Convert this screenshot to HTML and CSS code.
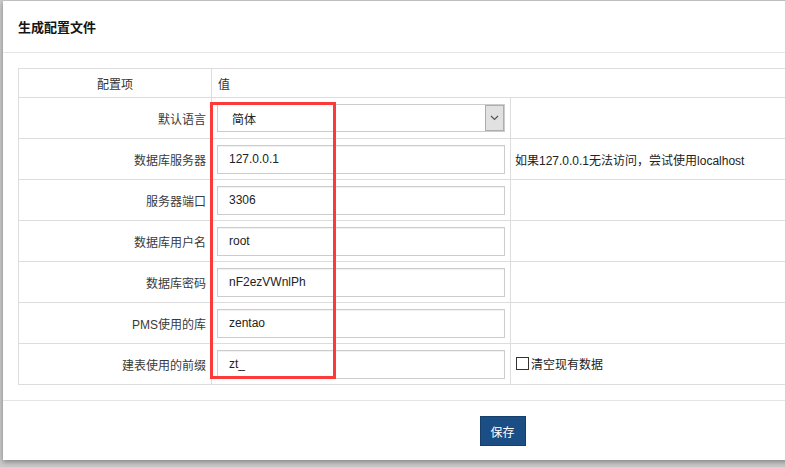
FILE: index.html
```html
<!DOCTYPE html>
<html>
<head>
<meta charset="utf-8">
<link rel="stylesheet" href="styles.css">
</head>
<body>
<div class="modal">
  <div class="modal-header">生成配置文件</div>
  <div class="modal-body">
    <table class="cfg">
      <colgroup><col class="c1"><col class="c2"><col></colgroup>
      <tr class="head"><th class="th-key">配置项</th><th class="th-val" colspan="2">值</th></tr>
      <tr>
        <td class="key">默认语言</td>
        <td class="val"><div class="select"><span class="select-value">简体</span><span class="select-arrow"><svg width="9" height="6" viewBox="0 0 9 6"><path d="M1 1 L4.5 4.5 L8 1" fill="none" stroke="#555" stroke-width="1.2"/></svg></span></div></td>
        <td class="note"></td>
      </tr>
      <tr>
        <td class="key">数据库服务器</td>
        <td class="val"><input class="inp" type="text" value="127.0.0.1"></td>
        <td class="note">如果127.0.0.1无法访问，尝试使用localhost</td>
      </tr>
      <tr>
        <td class="key">服务器端口</td>
        <td class="val"><input class="inp" type="text" value="3306"></td>
        <td class="note"></td>
      </tr>
      <tr>
        <td class="key">数据库用户名</td>
        <td class="val"><input class="inp" type="text" value="root"></td>
        <td class="note"></td>
      </tr>
      <tr>
        <td class="key">数据库密码</td>
        <td class="val"><input class="inp" type="text" value="nF2ezVWnlPh"></td>
        <td class="note"></td>
      </tr>
      <tr>
        <td class="key">PMS使用的库</td>
        <td class="val"><input class="inp" type="text" value="zentao"></td>
        <td class="note"></td>
      </tr>
      <tr>
        <td class="key">建表使用的前缀</td>
        <td class="val"><input class="inp" type="text" value="zt_"></td>
        <td class="note"><label class="chk"><input type="checkbox" class="box">清空现有数据</label></td>
      </tr>
    </table>
  </div>
  <div class="modal-footer"><button class="btn">保存</button></div>
</div>
<div class="annot"></div>
</body>
</html>
```
FILE: styles.css
```css
html, body {
  margin: 0;
  padding: 0;
  overflow: hidden;
}
body {
  background: #c9c9c9;
  padding: 1px 0 0 3px;
  width: 785px;
  height: 467px;
  box-sizing: border-box;
  font-family: "Liberation Sans", "Noto Sans CJK SC", sans-serif;
  font-size: 12px;
  color: #333;
  position: relative;
}
.modal {
  width: 998px;
  height: 459px;
  background: #fff;
  box-shadow: 0 2px 5px rgba(0,0,0,0.35);
  display: flex;
  flex-direction: column;
}
.modal-header {
  height: 51px;
  border-bottom: 1px solid #e5e5e5;
  padding-left: 15px;
  display: flex;
  align-items: center;
  font-size: 13px;
  font-weight: bold;
  color: #141414;
}
.modal-body {
  padding: 15px 15px 15px;
}
.cfg {
  width: 100%;
  border-collapse: collapse;
  border: 1px solid #ddd;
  table-layout: fixed;
}
.cfg col.c1 { width: 193px; }
.cfg col.c2 { width: 299px; }
.cfg th, .cfg td {
  border: 1px solid #ddd;
  padding: 0;
  vertical-align: middle;
}
.cfg tr.head th {
  height: 28px;
  font-weight: normal;
  color: #333;
}
.th-key { text-align: center; }
.th-val { text-align: left; padding-left: 6px !important; }
.cfg td { height: 40px; }
.key {
  text-align: right;
  padding-right: 5px !important;
  color: #3a3a3a;
}
.val { padding-left: 5px !important; }
.note { padding-left: 4px !important; color: #222; }
.inp {
  display: block;
  width: 288px;
  height: 29px;
  box-sizing: border-box;
  border: 1px solid #ccc;
  box-shadow: inset 0 1px 1px rgba(0,0,0,0.06);
  padding: 0 0 0 11px;
  margin: 0;
  font-family: "Liberation Sans", "Noto Sans CJK SC", sans-serif;
  font-size: 12px;
  color: #222;
  outline: none;
}
.select {
  display: flex;
  width: 288px;
  height: 28px;
  box-sizing: border-box;
  border: 1px solid #ccc;
}
.select-value {
  flex: 1;
  display: flex;
  align-items: center;
  padding-left: 14px;
  color: #222;
}
.select-arrow {
  width: 17px;
  background: #e1e1e1;
  border: 1px solid #adadad;
  display: flex;
  align-items: center;
  justify-content: center;
}
.chk {
  display: inline-flex;
  align-items: center;
  color: #222;
}
.box {
  appearance: none;
  -webkit-appearance: none;
  width: 13px;
  height: 13px;
  margin: 0 2px 0 1px;
  border: 1px solid #333;
  background: #fff;
}
.modal-footer {
  border-top: 1px solid #e5e5e5;
  flex: 1;
  display: flex;
  justify-content: center;
  align-items: flex-start;
  padding-top: 15px;
}
.btn {
  width: 46px;
  height: 30px;
  background: #1a4e85;
  border: 1px solid #163f6c;
  color: #fff;
  font-family: "Liberation Sans", "Noto Sans CJK SC", sans-serif;
  font-size: 12px;
  padding: 0;
  margin-left: 1px;
}
.annot {
  position: absolute;
  left: 210px;
  top: 102px;
  width: 126px;
  height: 277px;
  box-sizing: border-box;
  border: 3px solid #fd3a3a;
}
```
